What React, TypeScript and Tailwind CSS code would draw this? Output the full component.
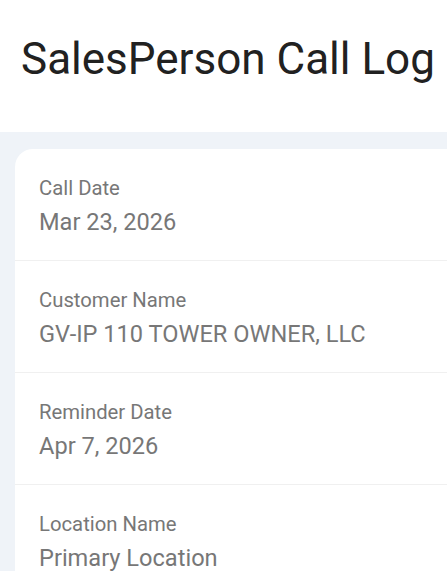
import React from "react";

const rows = [
  { label: "Call Date", value: "Mar 23, 2026" },
  { label: "Customer Name", value: "GV-IP 110 TOWER OWNER, LLC" },
  { label: "Reminder Date", value: "Apr 7, 2026" },
  { label: "Location Name", value: "Primary Location" },
];

export default function App() {
  return (
    <div
      className="w-[447px] h-[571px] overflow-hidden bg-white flex flex-col"
      style={{ fontFamily: "Roboto, 'Noto Sans', sans-serif" }}
    >
      <div className="h-[132px] shrink-0 flex items-start pt-[37px] pl-[21px] bg-white">
        <h1 className="text-[44px] leading-[44px] text-[#212121] whitespace-nowrap">SalesPerson Call Log</h1>
      </div>
      <div className="flex-1 bg-[#eff3f8] pl-[15px] pt-[17px]">
        <div className="bg-white rounded-tl-[18px] h-full">
          {rows.map((r, i) => (
            <div key={i} className="h-[112px] border-b border-[#f0f0f0] pl-[24px] pt-[27px]">
              <div className="text-[20.3px] leading-[24px] text-[#777777]">{r.label}</div>
              <div className="text-[23.6px] leading-[30px] mt-[7px] text-[#777777]">{r.value}</div>
            </div>
          ))}
        </div>
      </div>
    </div>
  );
}
